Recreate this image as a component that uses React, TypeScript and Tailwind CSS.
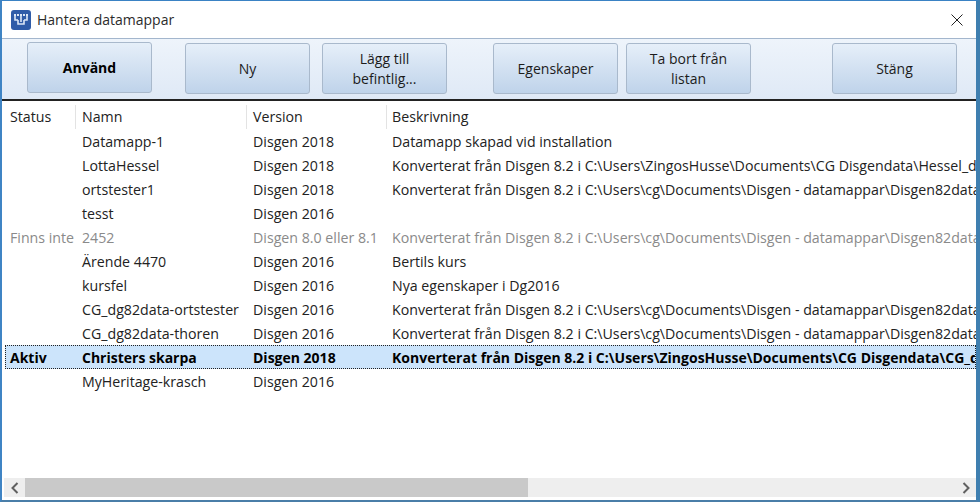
const rows = [
  { status: "", name: "Datamapp-1", version: "Disgen 2018", desc: "Datamapp skapad vid installation" },
  { status: "", name: "LottaHessel", version: "Disgen 2018", desc: "Konverterat från Disgen 8.2 i C:\\Users\\ZingosHusse\\Documents\\CG Disgendata\\Hessel_dg82data" },
  { status: "", name: "ortstester1", version: "Disgen 2018", desc: "Konverterat från Disgen 8.2 i C:\\Users\\cg\\Documents\\Disgen - datamappar\\Disgen82data" },
  { status: "", name: "tesst", version: "Disgen 2016", desc: "" },
  { status: "Finns inte", name: "2452", version: "Disgen 8.0 eller 8.1", desc: "Konverterat från Disgen 8.2 i C:\\Users\\cg\\Documents\\Disgen - datamappar\\Disgen82data", missing: true },
  { status: "", name: "Ärende 4470", version: "Disgen 2016", desc: "Bertils kurs" },
  { status: "", name: "kursfel", version: "Disgen 2016", desc: "Nya egenskaper i Dg2016" },
  { status: "", name: "CG_dg82data-ortstester", version: "Disgen 2016", desc: "Konverterat från Disgen 8.2 i C:\\Users\\cg\\Documents\\Disgen - datamappar\\Disgen82data" },
  { status: "", name: "CG_dg82data-thoren", version: "Disgen 2016", desc: "Konverterat från Disgen 8.2 i C:\\Users\\cg\\Documents\\Disgen - datamappar\\Disgen82data" },
  { status: "Aktiv", name: "Christers skarpa", version: "Disgen 2018", desc: "Konverterat från Disgen 8.2 i C:\\Users\\ZingosHusse\\Documents\\CG Disgendata\\CG_dg82data", active: true },
  { status: "", name: "MyHeritage-krasch", version: "Disgen 2016", desc: "" },
];

const ToolButton = ({ label, bold, className }: { label: React.ReactNode; bold?: boolean; className?: string }) => (
  <button className={`flex h-[51px] w-[125px] shrink-0 items-center justify-center rounded-[3px] border border-[#a9b9cc] bg-gradient-to-b from-[#e6eff9] to-[#bfd3ea] text-center leading-[20px] text-[#1c1c1c] ${bold ? "font-bold text-black" : ""} ${className ?? ""}`}>
    {label}
  </button>
);

const App = () => {
  return (
    <div className="flex h-[502px] w-[980px] flex-col overflow-hidden border-l-[2px] border-r-[4px] border-t-[1px] border-b-[2px] border-l-[#3f84c4] border-r-[#3f7fb0] border-t-[#3a82c4] border-b-[#4a7ea8] bg-white text-[14px] text-[#222] [font-family:'Open_Sans',sans-serif]">
      {/* title bar */}
      <div className="flex h-[37px] shrink-0 items-center pl-[9px] pr-[13px]">
        <svg width="20" height="20" viewBox="0 0 20 20" className="shrink-0">
          <rect width="20" height="20" rx="3" fill="#2f5ca8" />
          <path d="M4 5v5h3M10 5v7M16 5v5h-3M7 10v4h6v-4" fill="none" stroke="#dbe6f5" strokeWidth="1.6" />
          <path d="M3 4h2v2H3zM6 4h2v2H6zM9 4h2v2H9zM12 4h2v2h-2zM15 4h2v2h-2z" fill="#dbe6f5" />
        </svg>
        <span className="ml-[6px] text-[14px] text-[#2b2b2b]">Hantera datamappar</span>
        <svg width="12" height="12" viewBox="0 0 12 12" className="ml-auto shrink-0">
          <path d="M0.5 0.5l11 11M11.5 0.5l-11 11" stroke="#222" strokeWidth="1" fill="none" />
        </svg>
      </div>

      {/* toolbar */}
      <div className="flex h-[63px] shrink-0 items-start border-t border-t-[#a3b6cd] border-b-2 border-b-[#222] bg-gradient-to-b from-[#eef4fb] to-[#dfe9f6] pl-[25px] pt-[4px]">
        <ToolButton label="Använd" bold className="-mt-px" />
        <ToolButton label="Ny" className="ml-[33px]" />
        <ToolButton label={<>Lägg till<br />befintlig...</>} className="ml-[12px]" />
        <ToolButton label="Egenskaper" className="ml-[46px]" />
        <ToolButton label={<>Ta bort från<br />listan</>} className="ml-[8px]" />
        <ToolButton label="Stäng" className="ml-[81px]" />
      </div>

      {/* list */}
      <div className="flex min-h-0 flex-1 flex-col text-[14.2px]">
        <div className="flex h-[28px] shrink-0 items-end pl-[8px]">
          <div className="h-[24px] w-[65px] leading-[24px]">Status</div>
          <div className="h-[24px] w-[171px] border-l border-l-[#e3e3e3] pl-[6px] leading-[24px]">Namn</div>
          <div className="h-[24px] w-[140px] border-l border-l-[#e3e3e3] pl-[6px] leading-[24px]">Version</div>
          <div className="h-[24px] border-l border-l-[#e3e3e3] pl-[5px] leading-[24px]">Beskrivning</div>
        </div>
        <div className="flex-1">
          {rows.map((row) => (
            <div
              key={row.name}
              className={`ml-[3px] flex h-[24px] items-center whitespace-nowrap ${row.active ? "border border-dotted border-[#222] bg-[#cce4fb] pl-[4px] text-[14px] font-bold text-black" : "pl-[5px] pt-[2px]"} ${row.missing ? "text-[#8a8a8a]" : ""}`}
            >
              <div className="w-[72px] shrink-0">{row.status}</div>
              <div className="w-[171px] shrink-0">{row.name}</div>
              <div className="w-[139px] shrink-0">{row.version}</div>
              <div className="min-w-0 flex-1 overflow-hidden">{row.desc}</div>
            </div>
          ))}
        </div>

        {/* scrollbar */}
        <div className="mb-[3px] ml-[2px] flex h-[19px] shrink-0 bg-[#eeeeee]">
          <div className="flex w-[21px] items-center justify-center">
            <svg width="8" height="12" viewBox="0 0 8 12"><path d="M6.5 1L1.5 6l5 5" fill="none" stroke="#606060" strokeWidth="2" /></svg>
          </div>
          <div className="w-[503px] bg-[#c9c9c9]" />
          <div className="ml-auto flex w-[21px] items-center justify-center">
            <svg width="8" height="12" viewBox="0 0 8 12"><path d="M1.5 1l5 5-5 5" fill="none" stroke="#606060" strokeWidth="2" /></svg>
          </div>
        </div>
      </div>
    </div>
  );
};

export default App;
